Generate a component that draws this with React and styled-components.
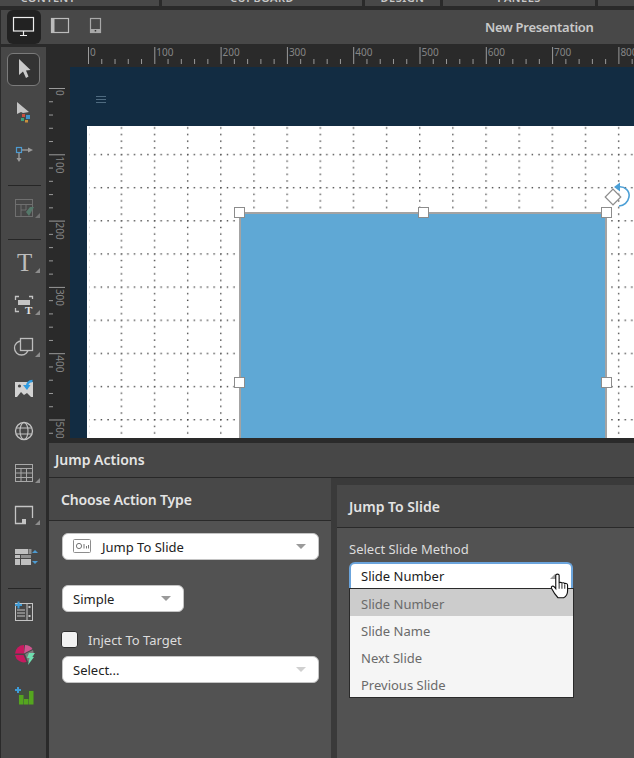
import React from "react"
import styled, { createGlobalStyle } from "styled-components"

const UI_FONT = `"Noto Sans", "Open Sans", "Liberation Sans", sans-serif`

const GlobalStyle = createGlobalStyle`
  html, body {
    margin: 0;
    padding: 0;
    background: #2a2a2a;
    overflow: hidden;
  }
  * { box-sizing: border-box; }
`

const Page = styled.div`
  width: 634px;
  height: 758px;
  overflow: hidden;
  display: flex;
  flex-direction: column;
  background: #2a2a2a;
  font-family: ${UI_FONT};
`

const TabStrip = styled.div`
  height: 6px;
  margin: 0 0 4px -63px;
  display: flex;
  gap: 3px;
  flex-shrink: 0;
`
const Tab = styled.div`
  width: ${p => p.$w}px;
  flex-shrink: 0;
  background: #484848;
  overflow: hidden;
  display: flex;
  justify-content: center;
  align-items: flex-end;
  color: #c8c8c8;
  font-size: 11px;
  font-weight: 600;
  line-height: 10px;
  letter-spacing: 0.5px;
  & > span { margin-bottom: 3px; }
`

const TopBar = styled.div`
  height: 34px;
  margin-left: 1px;
  flex-shrink: 0;
  background: #484848;
  display: flex;
  align-items: stretch;
  padding-left: 6px;
  position: relative;
`
const DeviceButton = styled.div`
  width: 34px;
  margin-right: 3px;
  display: flex;
  align-items: center;
  justify-content: center;
  border-radius: 6px;
  background: ${p => (p.$active ? "#222222" : "transparent")};
`
const DocTitle = styled.div`
  margin-left: auto;
  width: 149px;
  line-height: 35px;
  color: #c9c9c9;
  font-size: 13px;
  font-weight: 600;
  letter-spacing: -0.3px;
  white-space: nowrap;
`

const Body = styled.div`
  flex: 1;
  display: flex;
  min-height: 0;
`

const Tools = styled.div`
  width: 45px;
  margin: 3px 0 0 1px;
  flex-shrink: 0;
  background: #474747;
  display: flex;
  flex-direction: column;
  padding: 1px 0 0 1px;
`
const ToolSlot = styled.div`
  height: 42px;
  display: flex;
  align-items: center;
  justify-content: center;
`
const SelectedTool = styled.div`
  width: 33px;
  height: 33px;
  margin-left: -1px;
  border: 1px solid #7b7b7b;
  border-radius: 6px;
  background: #333333;
  display: flex;
  align-items: center;
  justify-content: center;
`
const ToolSep = styled.div`
  height: 1px;
  margin: ${p => p.$top}px 5px ${p => p.$bottom}px 6px;
  background: #262626;
`

const Main = styled.div`
  flex: 1;
  min-width: 0;
  display: flex;
  flex-direction: column;
`

const Workspace = styled.div`
  height: 394px;
  flex-shrink: 0;
  display: grid;
  grid-template-columns: 24px 1fr;
  grid-template-rows: 23px 1fr;
  overflow: hidden;
`
const RulerBox = styled.div`
  overflow: hidden;
  background: #2a2a2a;
  & svg { display: block; }
`
const Stage = styled.div`
  position: relative;
  overflow: hidden;
  background: #122c42;
  display: flex;
  flex-direction: column;
`
const PageHeader = styled.div`
  height: 59px;
  flex-shrink: 0;
  padding: 29px 0 0 26px;
`
const BurgerLine = styled.div`
  width: 10px;
  height: 1px;
  margin-bottom: 2px;
  background: #4f6b80;
`
const Artboard = styled.div`
  flex: 1;
  margin-left: 17px;
  position: relative;
  background: #ffffff;
  & > svg { display: block; }
`
const Shape = styled.div`
  position: absolute;
  left: 152px;
  top: 86px;
  width: 368px;
  height: 260px;
  background: #5fa8d5;
  border: 2px solid #a3a3a3;
`
const Handle = styled.div`
  position: absolute;
  left: ${p => p.$x}px;
  top: ${p => p.$y}px;
  width: 11px;
  height: 11px;
  background: #ffffff;
  border: 1px solid #8c8c8c;
`
const RotateIcon = styled.svg`
  position: absolute;
  left: 516px;
  top: 54px;
`

const Panel = styled.div`
  flex: 1;
  min-height: 0;
  margin: 5px 0 0 3px;
  display: flex;
  flex-direction: column;
  background: #3a3a3a;
`
const PanelTitle = styled.div`
  height: 35px;
  flex-shrink: 0;
  padding-left: 6px;
  line-height: 33px;
  font-size: 14px;
  font-weight: 600;
  color: #e4e4e4;
  background: #474747;
  border-bottom: 1px solid #282828;
`
const Columns = styled.div`
  flex: 1;
  min-height: 0;
  display: flex;
`
const LeftCol = styled.div`
  width: 282px;
  flex-shrink: 0;
  display: flex;
  flex-direction: column;
  background: #525252;
`
const RightCol = styled.div`
  flex: 1;
  margin: 7px 0 0 6px;
  display: flex;
  flex-direction: column;
  background: #525252;
`
const ColHeader = styled.div`
  height: 43px;
  flex-shrink: 0;
  padding-left: 12px;
  line-height: 44px;
  font-size: 14px;
  font-weight: 600;
  letter-spacing: ${p => (p.$tight ? "-0.15px" : "0")};
  color: #e4e4e4;
  background: #484848;
  border-bottom: 1px solid #2a2a2a;
`
const LeftBody = styled.div`
  padding: 12px 13px 0 13px;
  display: flex;
  flex-direction: column;
  align-items: flex-start;
`
const SelectBox = styled.div`
  width: ${p => p.$w}px;
  height: 27px;
  flex-shrink: 0;
  background: #ffffff;
  border: 1px solid #c4c4c4;
  border-radius: 6px;
  display: flex;
  align-items: center;
  padding: 0 12px 0 10px;
  color: #222222;
  font-size: 13px;
  margin-bottom: ${p => p.$mb || 0}px;
  & > svg:first-child { margin-right: 10px; }
`
const Caret = styled.div`
  margin-left: auto;
  width: 0;
  height: 0;
  border-left: 5px solid transparent;
  border-right: 5px solid transparent;
  border-top: 5px solid ${p => p.$c || "#9a9a9a"};
`
const CheckRow = styled.div`
  display: flex;
  align-items: center;
  height: 17px;
  margin-bottom: 8px;
`
const CheckBox = styled.div`
  width: 17px;
  height: 17px;
  margin: 0 10px 0 -1px;
  background: #f1f1f1;
  border: 1px solid #2e2e2e;
  border-radius: 3px;
`
const CheckLabel = styled.span`
  font-size: 13px;
  color: #dcdcdc;
`
const RightBody = styled.div`
  padding: 12px 0 0 12px;
  display: flex;
  flex-direction: column;
  align-items: flex-start;
`
const FieldLabel = styled.div`
  font-size: 13px;
  line-height: 18px;
  color: #dcdcdc;
  margin-bottom: 4px;
`
const MethodSelect = styled.div`
  width: 224px;
  height: 26px;
  background: #ffffff;
  border: 2px solid #6ba4dc;
  border-bottom: none;
  border-radius: 6px 6px 0 0;
  display: flex;
  align-items: center;
  padding: 0 10px;
  color: #1c1c1c;
  font-size: 13px;
  position: relative;
  z-index: 2;
`
const CaretUp = styled.div`
  position: absolute;
  right: 11px;
  top: 10px;
  width: 0;
  height: 0;
  border-left: 5px solid transparent;
  border-right: 5px solid transparent;
  border-bottom: 5px solid #9a9a9a;
`
const Cursor = styled.svg`
  position: absolute;
  left: 199px;
  top: 9px;
`
const Menu = styled.div`
  width: 225px;
  background: #f5f5f5;
  border: 1px solid #2a2a2a;
`
const MenuItem = styled.div`
  height: 27px;
  line-height: 31px;
  padding-left: 11px;
  font-size: 13px;
  color: #6a6a6a;
  background: ${p => (p.$active ? "#cccccc" : "transparent")};
`

const Flyout = () => <polygon points="27,26 32,26 32,21" fill="#8d8d8d" />

const ArrowIcon = () => (
  <svg width="24" height="24" viewBox="0 0 24 24">
    <path d="M7 2 L7 18 L11 14.5 L14 21 L16.5 19.5 L14 13.5 L18.5 13 Z" fill="#c9c9c9" />
  </svg>
)

const tools = {
  direct: (
    <>
      <path d="M9 7 L9 19 L13 17 L15 18 L21 17 Z" fill="#c4c4c4" />
      <rect x="14" y="19" width="3" height="3" fill="#c9503f" />
      <rect x="18" y="20" width="4" height="4" fill="#3f93c8" />
      <rect x="13" y="23" width="3" height="3" fill="#3da37a" />
      <rect x="17" y="25" width="3" height="2.5" fill="#c98f3d" />
    </>
  ),
  path: (
    <>
      <rect x="8.5" y="10.5" width="5" height="5" fill="none" stroke="#4d9bd1" strokeWidth="1.2" />
      <path d="M14 13 H21" stroke="#9a9a9a" strokeWidth="1.4" />
      <polygon points="20,10.5 25,13 20,15.5" fill="#9a9a9a" />
      <path d="M11 16 V22" stroke="#9a9a9a" strokeWidth="1.4" />
      <polygon points="8.5,21 13.5,21 11,25" fill="#9a9a9a" />
    </>
  ),
  layout: (
    <g opacity="0.6">
      <rect x="7.5" y="7.5" width="17" height="17" fill="none" stroke="#8a8a8a" />
      <path d="M8 12.5 H24 M13 13 V24 M13 18 H18 M18 13 V18" stroke="#8a8a8a" />
      <polygon points="22,15 26,15 21,24 18,20" fill="#5f9a82" />
      <polygon points="27,26 32,26 32,21" fill="#8d8d8d" />
    </g>
  ),
  text: (
    <>
      <text x="9" y="24" fontFamily="Liberation Serif" fontSize="25" fill="#bdbdbd">T</text>
      <Flyout />
    </>
  ),
  textFrame: (
    <>
      <path d="M7.5 11 V7.5 H11 M21 7.5 H24.5 V10 M7.5 19 V22.5 H11" fill="none" stroke="#c4c4c4" strokeWidth="1.3" />
      <rect x="10" y="11" width="12" height="5" fill="#c4c4c4" />
      <text x="17" y="25" fontFamily="Liberation Serif" fontWeight="700" fontSize="11" fill="#e0e0e0">T</text>
      <Flyout />
    </>
  ),
  shapes: (
    <>
      <circle cx="13.5" cy="17" r="7" fill="none" stroke="#bdbdbd" strokeWidth="1.3" />
      <rect x="12.5" y="7.5" width="12" height="12" fill="#474747" stroke="#bdbdbd" strokeWidth="1.3" />
      <Flyout />
    </>
  ),
  image: (
    <>
      <rect x="7" y="9" width="18" height="15" fill="#d2d2d2" />
      <polygon points="9,24 13,19 16,22 19,20 23,24" fill="#474747" />
      <circle cx="11.5" cy="13" r="1.6" fill="#474747" />
      <path d="M19 14 C19 10 21 8 24.5 8" fill="none" stroke="#2f9be0" strokeWidth="2.4" />
      <polygon points="15,12 22.5,12 19,17" fill="#2f9be0" />
    </>
  ),
  globe: (
    <>
      <circle cx="16" cy="16" r="8.5" fill="none" stroke="#c4c4c4" strokeWidth="1.3" />
      <ellipse cx="16" cy="16" rx="4" ry="8.5" fill="none" stroke="#c4c4c4" strokeWidth="1.1" />
      <path d="M8 13 H24 M8 19 H24" stroke="#c4c4c4" strokeWidth="1.1" />
    </>
  ),
  table: (
    <>
      <rect x="7.5" y="7.5" width="17" height="17" fill="none" stroke="#a8a8a8" />
      <path d="M8 11.5 H24 M8 16 H24 M8 20.5 H24 M13 11.5 V24 M18.5 11.5 V24" stroke="#a8a8a8" />
      <Flyout />
    </>
  ),
  note: (
    <>
      <path d="M18 24.5 H7.5 V7.5 H24.5 V19" fill="none" stroke="#c4c4c4" strokeWidth="1.3" />
      <rect x="14" y="20" width="4" height="5" fill="#c4c4c4" />
      <Flyout />
    </>
  ),
  grid: (
    <>
      <rect x="7" y="8" width="13" height="5" fill="#c0c0c0" />
      <rect x="20.5" y="8" width="3" height="5" fill="#8f8f8f" />
      <rect x="7" y="14" width="5" height="3" fill="#c0c0c0" />
      <rect x="13" y="14" width="10" height="3" fill="#8f8f8f" />
      <rect x="7" y="18" width="5" height="6" fill="#c0c0c0" />
      <rect x="13" y="18" width="10" height="6" fill="#c0c0c0" />
      <polygon points="27,9 30,12 24,12" fill="#4d9bd1" />
      <polygon points="24,20 30,20 27,23" fill="#4d9bd1" />
    </>
  ),
  addPage: (
    <>
      <rect x="7.5" y="7.5" width="17" height="17" fill="none" stroke="#c4c4c4" />
      <path d="M19 8 V24" stroke="#c4c4c4" />
      <path d="M9 14 H17 M9 17 H17 M9 20 H17" stroke="#9a9a9a" strokeWidth="1.5" />
      <rect x="20.5" y="10" width="2" height="2" fill="#c4c4c4" />
      <rect x="20.5" y="19" width="2" height="2" fill="#c4c4c4" />
      <path d="M10.5 5.5 V12.5 M7 9 H14" stroke="#3f9bd6" strokeWidth="2" />
    </>
  ),
  pie: (
    <>
      <path d="M16 15.5 L24.5 11 A9 9 0 0 0 17 7 Z" fill="#d0558f" />
      <path d="M16 15.5 L16 7 A9 9 0 0 0 7 15.5 Z" fill="#c7195f" />
      <path d="M7 17 L15.5 17 L18.5 24 A9 9 0 0 1 7 17 Z" fill="#c7195f" />
      <path d="M17 16 L25 12 A9 9 0 0 1 20 24 Z" fill="#7d7d7d" />
      <polygon points="21,15 27,15 24,19 26,19 20,27 21.5,20 19,20" fill="#6fe0b0" />
    </>
  ),
  chart: (
    <>
      <rect x="10.5" y="10" width="15" height="14.5" fill="#3f5a35" opacity="0.45" />
      <rect x="11" y="15" width="4.5" height="9.5" fill="#55a51f" />
      <rect x="16" y="19" width="4.5" height="5.5" fill="#55a51f" />
      <rect x="21" y="11" width="4.5" height="13.5" fill="#55a51f" />
      <path d="M10 7 V13 M7 10 H13" stroke="#3f9bd6" strokeWidth="2" />
    </>
  ),
}

const Tool = ({ name }) => (
  <ToolSlot>
    <svg width="32" height="32" viewBox="0 0 32 32">{tools[name]}</svg>
  </ToolSlot>
)

const SCALE = 66.3 / 100
const LABELS = [0, 100, 200, 300, 400, 500, 600, 700, 800]
const TICKS = Array.from({ length: 90 }, (_, i) => i)

// horizontal ruler, x=0 in here is the page x=70
const HRuler = () => (
  <svg width="564" height="23">
    {TICKS.map(i => {
      const x = 18.5 + i * 20 * SCALE
      const long = i % 5 === 0
      if (x > 564) return null
      return <line key={i} x1={x} x2={x} y1={long ? 3 : 15} y2="20" stroke="#9a9a9a" strokeWidth="1" />
    })}
    {LABELS.map(n => (
      <text key={n} x={20 + n * SCALE} y="12" fontFamily="Noto Sans" fontSize="10" fill="#858585">{n}</text>
    ))}
  </svg>
)

const VRuler = () => (
  <svg width="24" height="371">
    {TICKS.map(i => {
      const y = 21.5 + i * 20 * SCALE
      const long = i % 5 === 0
      if (y > 371) return null
      return <line key={i} x1="3" x2={long ? 19 : 7} y1={y} y2={y} stroke="#9a9a9a" strokeWidth="1" />
    })}
    {LABELS.slice(0, 6).map(n => (
      <text
        key={n}
        transform={`translate(10 ${23 + n * SCALE}) rotate(90)`}
        fontFamily="Noto Sans"
        fontSize="10"
        fill="#858585"
      >
        {n}
      </text>
    ))}
  </svg>
)

const DOT = 6.63
const CELL = DOT * 5

const DotGrid = () => (
  <svg width="547" height="312">
    <defs>
      <pattern id="dots" x="0.5" y="-38.5" width={CELL} height={CELL} patternUnits="userSpaceOnUse">
        {[0, 1, 2, 3, 4].map(i => (
          <React.Fragment key={i}>
            <rect x={i * DOT} y="0" width="1.4" height="1.4" fill="#444444" />
            <rect x="0" y={i * DOT} width="1.4" height="1.4" fill="#444444" />
          </React.Fragment>
        ))}
      </pattern>
    </defs>
    <rect x="2" width="545" height="312" fill="url(#dots)" />
  </svg>
)

const handles = [
  [147, 81], [331, 81], [514, 81],
  [147, 251], [514, 251],
]

export default function App() {
  return (
    <Page>
      <GlobalStyle />
      <TabStrip>
        <Tab $w={222}><span>CONTENT</span></Tab>
        <Tab $w={200}><span>CUPBOARD</span></Tab>
        <Tab $w={75}><span>DESIGN</span></Tab>
        <Tab $w={152}><span>PANELS</span></Tab>
        <Tab $w={36} />
      </TabStrip>

      <TopBar>
        <DeviceButton $active>
          <svg width="24" height="24" viewBox="0 0 24 24">
            <rect x="1.5" y="2.5" width="20" height="13.5" fill="none" stroke="#efefef" strokeWidth="1.2" />
            <path d="M11.5 16 V20 M8 20.5 H15" stroke="#efefef" strokeWidth="1.2" />
          </svg>
        </DeviceButton>
        <DeviceButton>
          <svg width="24" height="24" viewBox="0 0 24 24">
            <rect x="2.5" y="3.5" width="17" height="14" fill="none" stroke="#bcbcbc" strokeWidth="1.2" />
            <rect x="2.5" y="3.5" width="3" height="14" fill="#bcbcbc" />
          </svg>
        </DeviceButton>
        <DeviceButton>
          <svg width="24" height="24" viewBox="0 0 24 24">
            <rect x="4.5" y="3.5" width="10" height="14" fill="none" stroke="#a8a8a8" strokeWidth="1.2" />
            <rect x="4.5" y="14" width="10" height="3.5" fill="#a8a8a8" />
            <rect x="8.7" y="15" width="1.5" height="1.5" fill="#333333" />
          </svg>
        </DeviceButton>
        <DocTitle>New Presentation</DocTitle>
      </TopBar>

      <Body>
        <Tools>
          <ToolSlot>
            <SelectedTool><ArrowIcon /></SelectedTool>
          </ToolSlot>
          <Tool name="direct" />
          <Tool name="path" />
          <ToolSep $top={11} $bottom={1} />
          <Tool name="layout" />
          <ToolSep $top={10} $bottom={2} />
          <Tool name="text" />
          <Tool name="textFrame" />
          <Tool name="shapes" />
          <Tool name="image" />
          <Tool name="globe" />
          <Tool name="table" />
          <Tool name="note" />
          <Tool name="grid" />
          <ToolSep $top={10} $bottom={2} />
          <Tool name="addPage" />
          <Tool name="pie" />
          <Tool name="chart" />
        </Tools>

        <Main>
          <Workspace>
            <RulerBox />
            <RulerBox><HRuler /></RulerBox>
            <RulerBox><VRuler /></RulerBox>
            <Stage>
              <PageHeader>
                <BurgerLine />
                <BurgerLine />
                <BurgerLine />
              </PageHeader>
              <Artboard>
                <DotGrid />
                <Shape />
                {handles.map(([x, y]) => (
                  <Handle key={`${x}-${y}`} $x={x} $y={y} />
                ))}
                <RotateIcon width="28" height="28" viewBox="0 0 28 28">
                  <rect x="4.5" y="11.5" width="11" height="11" fill="#ffffff" stroke="#8c8c8c" strokeWidth="1.2" transform="rotate(45 10 17)" />
                  <path d="M15 7 C22 6 27 11 26 17 C25 22 21 26 16 26" fill="none" stroke="#4b9fd6" strokeWidth="1.5" />
                  <polygon points="11,7 17,2.5 17,11.5" fill="#4b9fd6" />
                </RotateIcon>
              </Artboard>
            </Stage>
          </Workspace>

          <Panel>
            <PanelTitle>Jump Actions</PanelTitle>
            <Columns>
              <LeftCol>
                <ColHeader $tight>Choose Action Type</ColHeader>
                <LeftBody>
                  <SelectBox $w={257} $mb={25}>
                    <svg width="19" height="15" viewBox="0 0 19 15">
                      <rect x="0.5" y="0.5" width="17" height="13" rx="1" fill="none" stroke="#8d8d8d" />
                      <circle cx="6" cy="7" r="2.6" fill="none" stroke="#777777" />
                      <path d="M11 5 V9.5 M13.5 7 V9.5 M15.5 6 V9.5" stroke="#777777" />
                    </svg>
                    Jump To Slide
                    <Caret />
                  </SelectBox>
                  <SelectBox $w={122} $mb={19}>
                    Simple
                    <Caret />
                  </SelectBox>
                  <CheckRow>
                    <CheckBox />
                    <CheckLabel>Inject To Target</CheckLabel>
                  </CheckRow>
                  <SelectBox $w={257}>
                    Select...
                    <Caret $c="#d0d0d0" />
                  </SelectBox>
                </LeftBody>
              </LeftCol>
              <RightCol>
                <ColHeader>Jump To Slide</ColHeader>
                <RightBody>
                  <FieldLabel>Select Slide Method</FieldLabel>
                  <MethodSelect>
                    Slide Number
                    <CaretUp />
                    <Cursor width="25" height="27" viewBox="0 0 22 24">
                      <path
                        d="M5 2 C5 0.6 8 0.6 8 2 L8 9 C8 8 10.5 8 10.5 9.4 C10.5 8.4 13 8.4 13 9.8 C13 9 15.5 9 15.5 10.6 L15.5 16 C15.5 19 14 21 12 22 L7 22 C5 20 3 17 1.2 13.5 C0.6 12 2.5 11 3.5 12.2 L5 14 Z"
                        fill="#ffffff"
                        stroke="#111111"
                        strokeWidth="1"
                      />
                      <path d="M8 9 V14 M10.5 9.5 V14 M13 10 V14" stroke="#111111" strokeWidth="0.8" />
                    </Cursor>
                  </MethodSelect>
                  <Menu>
                    <MenuItem $active>Slide Number</MenuItem>
                    <MenuItem>Slide Name</MenuItem>
                    <MenuItem>Next Slide</MenuItem>
                    <MenuItem>Previous Slide</MenuItem>
                  </Menu>
                </RightBody>
              </RightCol>
            </Columns>
          </Panel>
        </Main>
      </Body>
    </Page>
  )
}
